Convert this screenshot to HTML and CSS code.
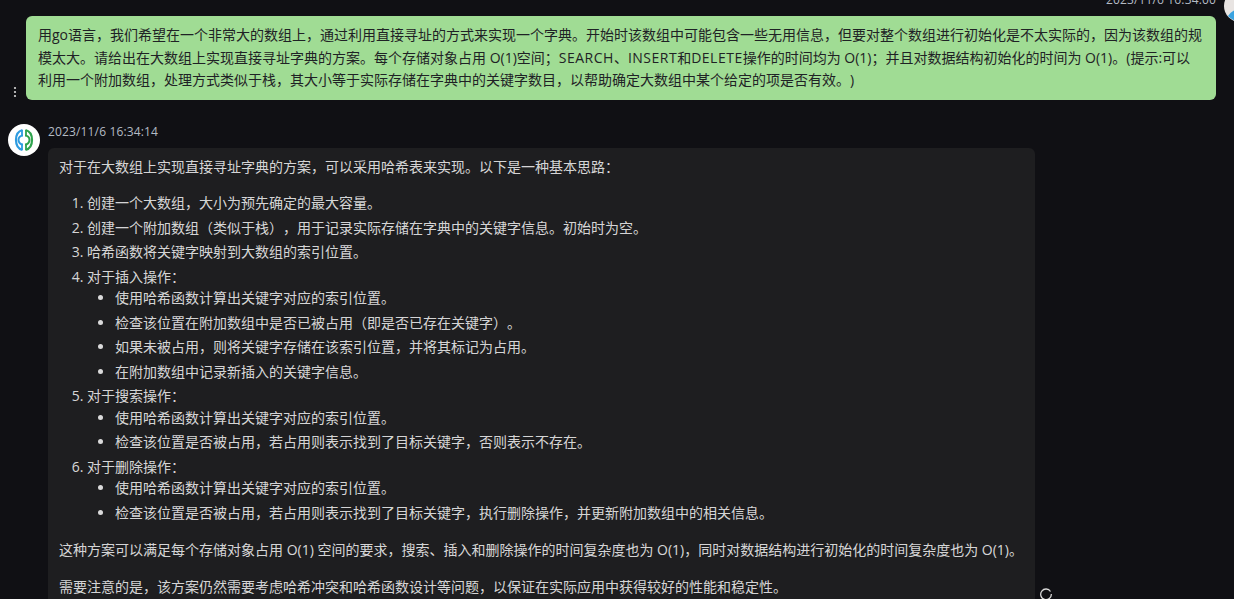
FILE: index.html
```html
<!DOCTYPE html>
<html lang="zh-CN">
<head>
  <meta charset="UTF-8" />
  <title>Chat</title>
  <link rel="stylesheet" href="styles.css">
</head>
<body>
  <div class="chat">
    <div class="msg msg-user">
      <div class="msg-col">
        <div class="time time-user">2023/11/6 16:34:00</div>
        <div class="bubble-row">
          <svg class="more" width="4" height="12" viewBox="0 0 4 12"><circle cx="2" cy="2" r="1.1"/><circle cx="2" cy="6" r="1.1"/><circle cx="2" cy="10" r="1.1"/></svg>
          <div class="bubble bubble-user">用go语言，我们希望在一个非常大的数组上，通过利用直接寻址的方式来实现一个字典。开始时该数组中可能包含一些无用信息，但要对整个数组进行初始化是不太实际的，因为该数组的规模太大。请给出在大数组上实现直接寻址字典的方案。每个存储对象占用 O(1)空间；<span class="caps">SEARCH</span>、<span class="caps">INSERT</span>和<span class="caps">DELETE</span>操作的时间均为 O(1)；并且对数据结构初始化的时间为 O(1)。(提示:可以利用一个附加数组，处理方式类似于栈，其大小等于实际存储在字典中的关键字数目，以帮助确定大数组中某个给定的项是否有效。)</div>
        </div>
      </div>
      <svg class="avatar" width="32" height="32" viewBox="0 0 32 32"><circle cx="16" cy="16" r="16" fill="#e8e4e2"/><path d="M4 26a14 14 0 0 1 24 0a16 16 0 0 1-24 0z" fill="#3ba3e0"/></svg>
    </div>

    <div class="msg msg-bot">
      <svg class="avatar" width="32" height="32" viewBox="0 0 32 32">
        <circle cx="16" cy="16" r="16" fill="#fff"/>
        <path d="M14.500 6C10.500 7 8 11 8 16s2.500 9 6.500 10" fill="none" stroke="#2d9be0" stroke-width="2.200"/>
        <path d="M17.500 6C21.500 7 24 11 24 16s-2.500 9-6.500 10" fill="none" stroke="#2fa34e" stroke-width="2.200"/>
        <path d="M15 11.500a4.500 4.500 0 0 0 0 9" fill="none" stroke="#2d9be0" stroke-width="2"/>
        <path d="M17 11.500a4.500 4.500 0 0 1 0 9" fill="none" stroke="#2fa34e" stroke-width="2"/>
        <path d="M14 6v5.500M14 20.500V26" stroke="#2d9be0" stroke-width="1.800"/>
        <path d="M18 6v5.500M18 20.500V26" stroke="#2fa34e" stroke-width="1.800"/>
      </svg>
      <div class="msg-col">
        <div class="time">2023/11/6 16:34:14</div>
        <div class="bubble bubble-bot">
          <p>对于在大数组上实现直接寻址字典的方案，可以采用哈希表来实现。以下是一种基本思路：</p>
          <ol>
            <li>创建一个大数组，大小为预先确定的最大容量。</li>
            <li>创建一个附加数组（类似于栈），用于记录实际存储在字典中的关键字信息。初始时为空。</li>
            <li>哈希函数将关键字映射到大数组的索引位置。</li>
            <li>对于插入操作：
              <ul>
                <li>使用哈希函数计算出关键字对应的索引位置。</li>
                <li>检查该位置在附加数组中是否已被占用（即是否已存在关键字）。</li>
                <li>如果未被占用，则将关键字存储在该索引位置，并将其标记为占用。</li>
                <li>在附加数组中记录新插入的关键字信息。</li>
              </ul>
            </li>
            <li>对于搜索操作：
              <ul>
                <li>使用哈希函数计算出关键字对应的索引位置。</li>
                <li>检查该位置是否被占用，若占用则表示找到了目标关键字，否则表示不存在。</li>
              </ul>
            </li>
            <li>对于删除操作：
              <ul>
                <li>使用哈希函数计算出关键字对应的索引位置。</li>
                <li>检查该位置是否被占用，若占用则表示找到了目标关键字，执行删除操作，并更新附加数组中的相关信息。</li>
              </ul>
            </li>
          </ol>
          <p>这种方案可以满足每个存储对象占用 O(1) 空间的要求，搜索、插入和删除操作的时间复杂度也为 O(1)，同时对数据结构进行初始化的时间复杂度也为 O(1)。</p>
          <p>需要注意的是，该方案仍然需要考虑哈希冲突和哈希函数设计等问题，以保证在实际应用中获得较好的性能和稳定性。</p>
        </div>
      </div>
      <svg class="spinner" width="14" height="14" viewBox="0 0 14 14"><path d="M11.500 4.500A5.300 5.300 0 1 0 12.300 7" fill="none" stroke="#d8d8d8" stroke-width="1.300"/></svg>
    </div>
  </div>
</body>
</html>
```

FILE: styles.css
```css
html, body {
  margin: 0;
  height: 100%;
  overflow: hidden;
  background: #101014;
}
body {
  font-family: "Open Sans", "Noto Sans CJK SC", sans-serif;
  font-size: 14px;
  color: rgba(255,255,255,0.84);
  text-spacing-trim: space-all;
  font-feature-settings: "chws" 0, "palt" 0;
}
.chat {
  margin-top: -8px;
  padding: 0 8px;
}
.msg {
  display: flex;
  gap: 8px;
}
.msg-user {
  margin-bottom: 24px;
}
.msg-bot {
  position: relative;
}
.msg-col {
  display: flex;
  flex: none;
  flex-direction: column;
}
.avatar {
  flex: none;
}
.msg-user .avatar {
  margin-top: -2px;
}
.time {
  font-size: 12px;
  line-height: 16px;
  letter-spacing: 0.15px;
  color: #b4bbc4;
  margin-bottom: 8px;
}
.time-user {
  text-align: right;
}
.bubble-row {
  display: flex;
  align-items: flex-end;
  gap: 9px;
}
.more {
  flex: none;
  fill: #d8d8d8;
  margin-bottom: 2px;
  margin-left: 5px;
}
.bubble {
  border-radius: 6px;
}
.bubble-user {
  width: 1166px;
  padding: 8px 12px;
  line-height: 22.670px;
  background: #a0dc94;
  color: #1f2225;
}
.caps {
  letter-spacing: 0.5px;
}
.bubble-bot {
  width: 964px;
  padding: 8px 12px 8px 11px;
  line-height: 21.500px;
  background: #1e1e20;
}
.bubble-bot p {
  margin: 0 0 15px;
}
.bubble-bot ol {
  margin: -0.500px 0 16px;
  padding-left: 28px;
}
.bubble-bot ul {
  margin: 0;
  padding-left: 28px;
  list-style: disc;
}
.bubble-bot li {
  margin-bottom: 3px;
}
.bubble-bot ul > li:last-child {
  margin-bottom: 0;
}
.spinner {
  position: absolute;
  left: 1031px;
  top: 463px;
}
```
